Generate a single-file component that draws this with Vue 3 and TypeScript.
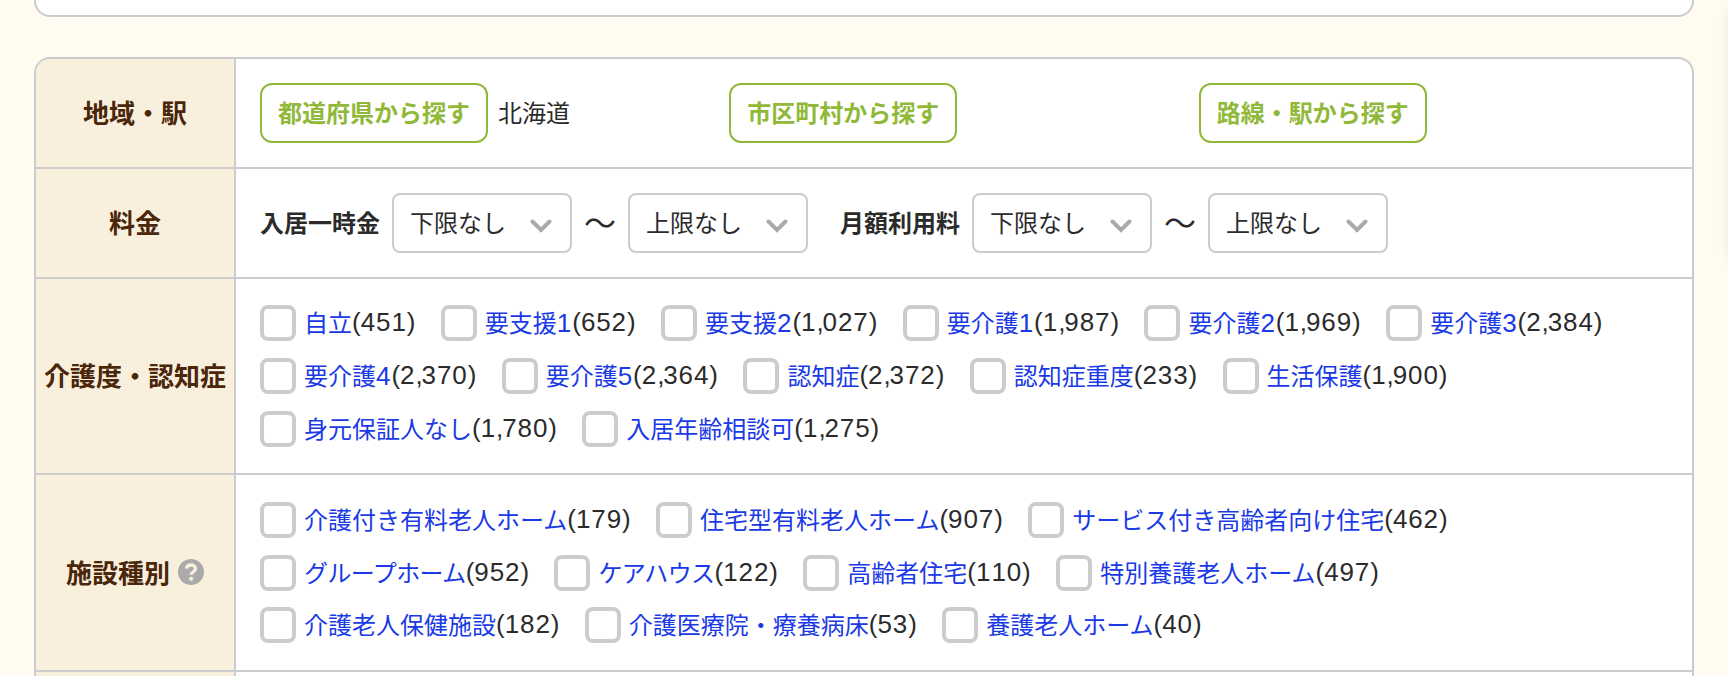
<script setup lang="ts">
interface Item {
  name: string
  level?: string
  count: string
  kana?: boolean
}

interface Range {
  label: string
  options: string[]
}

const areas: { label: string; selected?: string }[] = [
  { label: '都道府県から探す', selected: '北海道' },
  { label: '市区町村から探す' },
  { label: '路線・駅から探す' },
]

const ranges: Range[] = [
  { label: '入居一時金', options: ['下限なし', '上限なし'] },
  { label: '月額利用料', options: ['下限なし', '上限なし'] },
]

const groups: { title: string; help: boolean; rows: Item[][] }[] = [
  {
    title: '介護度・認知症',
    help: false,
    rows: [
      [
        { name: '自立', count: '451' },
        { name: '要支援', level: '1', count: '652' },
        { name: '要支援', level: '2', count: '1,027' },
        { name: '要介護', level: '1', count: '1,987' },
        { name: '要介護', level: '2', count: '1,969' },
        { name: '要介護', level: '3', count: '2,384' },
      ],
      [
        { name: '要介護', level: '4', count: '2,370' },
        { name: '要介護', level: '5', count: '2,364' },
        { name: '認知症', count: '2,372' },
        { name: '認知症重度', count: '233' },
        { name: '生活保護', count: '1,900' },
      ],
      [
        { name: '身元保証人なし', count: '1,780' },
        { name: '入居年齢相談可', count: '1,275' },
      ],
    ],
  },
  {
    title: '施設種別',
    help: true,
    rows: [
      [
        { name: '介護付き有料老人ホーム', count: '179' },
        { name: '住宅型有料老人ホーム', count: '907' },
        { name: 'サービス付き高齢者向け住宅', count: '462' },
      ],
      [
        { name: 'グループホーム', count: '952', kana: true },
        { name: 'ケアハウス', count: '122', kana: true },
        { name: '高齢者住宅', count: '110' },
        { name: '特別養護老人ホーム', count: '497' },
      ],
      [
        { name: '介護老人保健施設', count: '182' },
        { name: '介護医療院・療養病床', count: '53' },
        { name: '養護老人ホーム', count: '40' },
      ],
    ],
  },
]
</script>

<template>
  <main class="page">
    <section class="previous"></section>

    <section class="table">
      <div class="row short">
        <div class="head"><span class="title">地域・駅</span></div>
        <div class="cell areas">
          <div v-for="a in areas" :key="a.label" class="area">
            <button class="find" type="button">{{ a.label }}</button>
            <span v-if="a.selected" class="selected">{{ a.selected }}</span>
          </div>
        </div>
      </div>

      <div class="row short">
        <div class="head"><span class="title">料金</span></div>
        <div class="cell prices">
          <div v-for="r in ranges" :key="r.label" class="range">
            <b class="range-label">{{ r.label }}</b>
            <template v-for="(o, i) in r.options" :key="o">
              <span v-if="i > 0" class="tilde">〜</span>
              <div class="select">
                <span class="value">{{ o }}</span>
                <svg width="22" height="14" viewBox="0 0 22 14">
                  <path d="M2.5 2.5 11 11 19.5 2.5" fill="none" stroke="#aaa" stroke-width="4" stroke-linecap="round" />
                </svg>
              </div>
            </template>
          </div>
        </div>
      </div>

      <div v-for="g in groups" :key="g.title" class="row tall">
        <div class="head">
          <span class="title">{{ g.title }}</span>
          <svg v-if="g.help" class="help" width="26" height="26" viewBox="0 0 26 26">
            <circle cx="13" cy="13" r="13" fill="#aaa" />
            <path d="M8.4 9.6C8.8 7.2 10.6 6 13 6c2.6 0 4.5 1.500 4.5 3.700 0 3-4.200 3.100-4.200 6.100" fill="none" stroke="#f8f0dc" stroke-width="3.400" />
            <circle cx="13.200" cy="19.800" r="2.100" fill="#f8f0dc" />
          </svg>
        </div>
        <div class="cell checks">
          <div v-for="(line, n) in g.rows" :key="n" class="line">
            <label v-for="item in line" :key="item.name + item.count" class="item">
              <input class="box" type="checkbox" />
              <a class="link" :class="{ kana: item.kana }">{{ item.name }}<span v-if="item.level" class="num">{{ item.level }}</span></a>
              <span class="num count"><span class="paren">(</span><template v-for="(part, p) in item.count.split(',')" :key="p"><span v-if="p > 0" class="comma">,</span>{{ part }}</template><span class="paren">)</span></span>
            </label>
          </div>
        </div>
      </div>

      <div class="row next">
        <div class="head"></div>
        <div class="cell"></div>
      </div>
    </section>

    <aside class="side-panel"></aside>
  </main>
</template>

<style>
body {
  margin: 0;
  background: #fffbf0;
}
</style>

<style scoped>
.page {
  position: relative;
  box-sizing: border-box;
  height: 676px;
  padding: 0 34px;
  overflow: hidden;
  background: #fffbf0;
  color: #2b2b2b;
  font: 24px/36px "Noto Sans CJK JP", sans-serif;
}
/* Panel parked beyond the right edge; only its shadow is visible. */
.side-panel {
  position: absolute;
  top: 8px;
  left: 100%;
  width: 40px;
  height: 250px;
  box-shadow: 0 0 10px rgba(0, 0, 0, 0.08);
}
.previous {
  box-sizing: border-box;
  height: 17px;
  margin-bottom: 40px;
  border: 2px solid #ccc;
  border-top: 0;
  border-radius: 0 0 16px 16px;
  background: #fff;
}
.table {
  border: 2px solid #ccc;
  border-bottom: 0;
  border-radius: 16px 16px 0 0;
  background: #fff;
  overflow: hidden;
}
.row {
  display: grid;
  grid-template-columns: 200px 1fr;
  box-sizing: border-box;
  border-bottom: 2px solid #ccc;
}
.short {
  height: 110px;
}
.tall {
  height: 196px;
}
.tall + .tall {
  height: 197px;
}
.next {
  height: 40px;
}
.head {
  display: flex;
  align-items: center;
  justify-content: center;
  gap: 8px;
  border-right: 2px solid #ccc;
  background: #f8f0dc;
  color: #4a260b;
  font-size: 26px;
  font-weight: 700;
  white-space: nowrap;
}
.title,
.selected,
.value,
.range-label {
  padding-bottom: 3px;
}
.title {
  padding-bottom: 2px;
}
.help {
  flex: none;
  margin-bottom: 2px;
}
.cell {
  padding: 0 24px;
}
.areas {
  display: grid;
  grid-template-columns: repeat(3, 1fr);
  align-items: center;
}
.area {
  display: flex;
  align-items: center;
  gap: 10px;
}
.find {
  box-sizing: border-box;
  width: 228px;
  height: 60px;
  padding: 0 0 3px;
  border: 2px solid #90b93a;
  border-radius: 12px;
  background: #fff;
  color: #90b93a;
  font: inherit;
  font-weight: 700;
}
.prices {
  display: flex;
  align-items: center;
  gap: 32px;
}
.range {
  display: flex;
  align-items: center;
}
.range-label {
  margin-right: 12px;
}
.tilde {
  width: 56px;
  padding-bottom: 4px;
  text-align: center;
  font-size: 32px;
}
.select {
  display: flex;
  align-items: center;
  justify-content: space-between;
  box-sizing: border-box;
  width: 180px;
  height: 60px;
  padding: 0 18px 0 16px;
  border: 2px solid #ccc;
  border-radius: 8px;
  background: #fff;
}
.select svg {
  margin-top: 5px;
}
.checks {
  display: flex;
  flex-direction: column;
  gap: 17px;
  padding-top: 26px;
}
.tall + .tall .checks {
  padding-top: 27px;
  gap: 16.5px;
}
.line {
  display: flex;
  gap: 25.4px;
}
.item {
  display: flex;
  height: 36px;
  white-space: nowrap;
}
.box {
  appearance: none;
  box-sizing: border-box;
  flex: none;
  width: 36px;
  height: 36px;
  margin: 0 8px 0 0;
  border: 4px solid #ccc;
  border-radius: 8px;
  background: #fff;
}
.link {
  color: #1a3ae6;
  line-height: 33px;
}
.kana {
  letter-spacing: -0.6px;
}
.num {
  font-family: "Liberation Sans", sans-serif;
  font-size: 26px;
  font-kerning: none;
  letter-spacing: 0.9px;
}
.count {
  line-height: 35px;
}
.paren {
  letter-spacing: 0;
}
.comma {
  letter-spacing: -1.1px;
}
</style>
